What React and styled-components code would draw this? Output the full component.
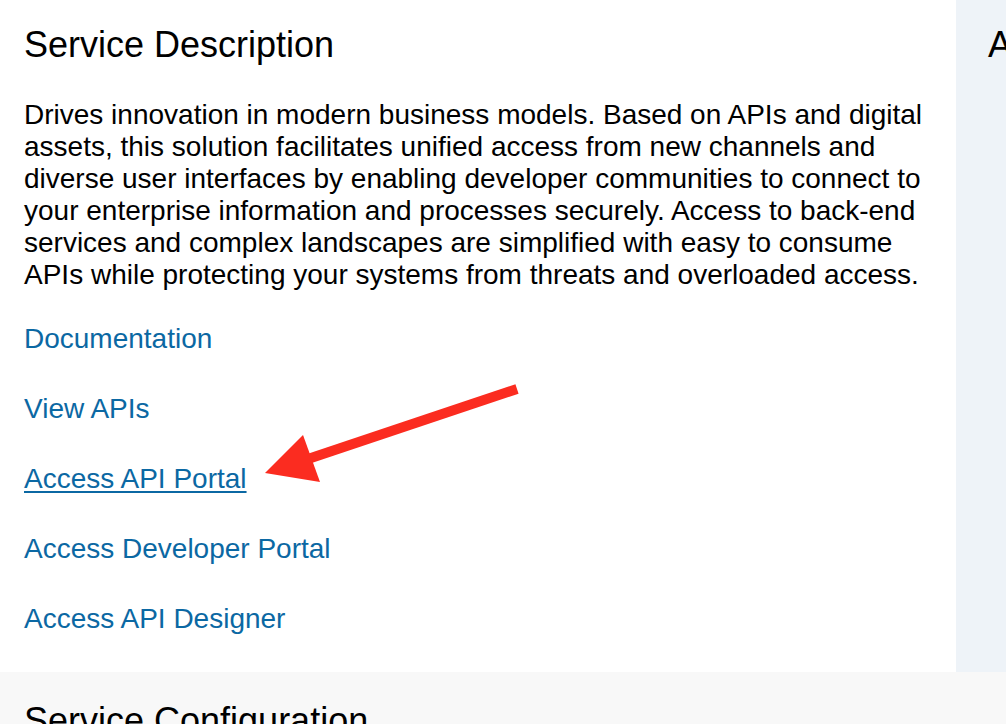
import React from "react";
import styled, { createGlobalStyle } from "styled-components";

const GlobalStyle = createGlobalStyle`
  html, body {
    margin: 0;
    padding: 0;
    background: #ffffff;
    overflow: hidden;
  }
  body {
    font-family: "Liberation Sans", Arial, Helvetica, sans-serif;
    color: #000;
  }
`;

const Page = styled.div`
  position: relative;
  width: 1006px;
  height: 724px;
  overflow: hidden;
`;

const Top = styled.div`
  display: flex;
  height: 672px;
`;

const Main = styled.main`
  width: 956px;
  flex: none;
  box-sizing: border-box;
  padding: 24px 24px 0 24px;
  background: #ffffff;
`;

const Sidebar = styled.aside`
  flex: 1;
  min-width: 0;
  overflow: hidden;
  white-space: nowrap;
  box-sizing: border-box;
  padding: 24px 0 0 32px;
  background: #eef3f8;
`;

const Heading = styled.h2`
  margin: 0;
  font-size: 36px;
  line-height: 42px;
  font-weight: normal;
  color: #000;
`;

const Description = styled.p`
  margin: 33px 0 0 0;
  font-size: 28px;
  line-height: 32px;
  color: #000;
`;

const LinkList = styled.ul`
  list-style: none;
  margin: 32px 0 0 0;
  padding: 0;
  display: flex;
  flex-direction: column;
  gap: 38px;
`;

const LinkItem = styled.li`
  font-size: 28px;
  line-height: 32px;
`;

const TextLink = styled.a`
  color: #0b68a3;
  text-decoration: ${p => (p.$active ? "underline" : "none")};
  text-decoration-thickness: 2px;
  text-underline-offset: 3px;
  cursor: pointer;
`;

const ConfigSection = styled.section`
  background: #f8f8f8;
  padding: 28px 24px 24px 24px;
  height: 52px;
  box-sizing: content-box;
`;

const Annotation = styled.svg`
  position: absolute;
  left: 0;
  top: 0;
  pointer-events: none;
`;

const links = [
  { label: "Documentation" },
  { label: "View APIs" },
  { label: "Access API Portal", active: true },
  { label: "Access Developer Portal" },
  { label: "Access API Designer" }
];

export default function App() {
  return (
    <Page>
      <GlobalStyle />
      <Top>
        <Main>
          <Heading>Service Description</Heading>
          <Description>
            Drives innovation in modern business models. Based on APIs and
            digital assets, this solution facilitates unified access from new
            channels and diverse user interfaces by enabling developer
            communities to connect to your enterprise information and processes
            securely. Access to back-end services and complex landscapes are
            simplified with easy to consume APIs while protecting your systems
            from threats and overloaded access.
          </Description>
          <LinkList>
            {links.map(link => (
              <LinkItem key={link.label}>
                <TextLink href="#" $active={link.active}>
                  {link.label}
                </TextLink>
              </LinkItem>
            ))}
          </LinkList>
        </Main>
        <Sidebar>
          <Heading>About</Heading>
        </Sidebar>
      </Top>
      <ConfigSection>
        <Heading>Service Configuration</Heading>
      </ConfigSection>

      {/* red callout arrow pointing at the API portal link */}
      <Annotation width="1006" height="724" viewBox="0 0 1006 724">
        <line
          x1="517"
          y1="389"
          x2="305"
          y2="460"
          stroke="#fb2c20"
          strokeWidth="10"
        />
        <polygon points="265,473 303,435 320,482" fill="#fb2c20" />
      </Annotation>
    </Page>
  );
}
